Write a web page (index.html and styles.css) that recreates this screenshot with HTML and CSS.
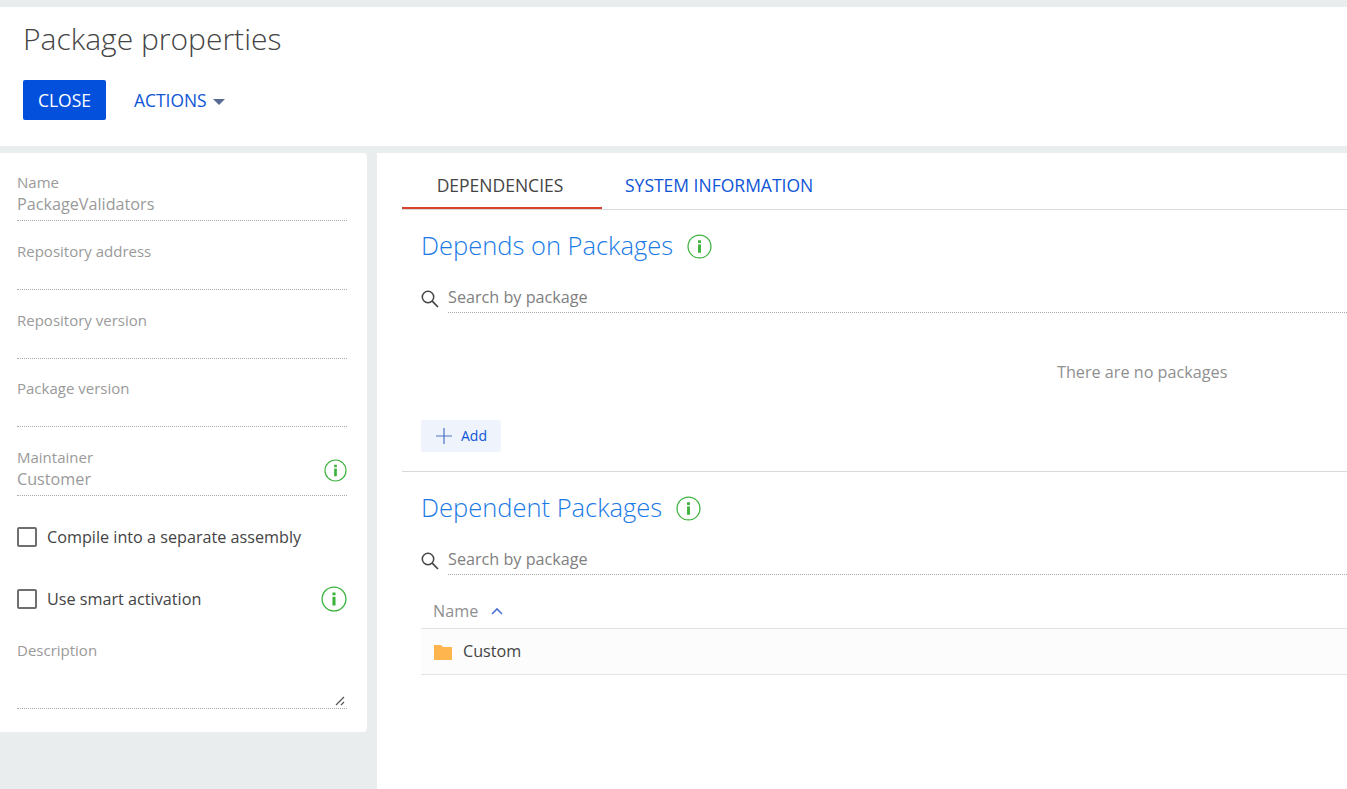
FILE: index.html
```html
<!doctype html>
<html>
  <head>
    <title>Package properties</title>
    <link rel="stylesheet" href="styles.css">
  </head>
  <body>
    <svg class="defs" width="0" height="0">
      <symbol id="info" viewBox="0 0 24 24">
        <circle cx="12" cy="12" r="11" fill="none" stroke="#3cb33c" stroke-width="1.2"/>
        <rect x="10.6" y="10" width="2.8" height="8" fill="#3cb33c"/>
        <rect x="10.6" y="6" width="2.8" height="2.6" fill="#3cb33c"/>
      </symbol>
      <symbol id="search" viewBox="0 0 18 18">
        <circle cx="7" cy="7" r="5.7" fill="none" stroke="#444" stroke-width="1.5"/>
        <path d="M11.2 11.2 L17 17" stroke="#444" stroke-width="1.7" fill="none"/>
      </symbol>
    </svg>
    <header class="page-head">
      <h1 class="page-title">Package properties</h1>
      <div class="actions">
        <button class="btn-close">CLOSE</button>
        <span class="btn-actions">ACTIONS<i class="caret"></i></span>
      </div>
    </header>
    <div class="content">
      <aside class="side">
        <div class="card">
          <div class="field field-name">
            <label>Name</label>
            <div class="value">PackageValidators</div>
          </div>
          <div class="field field-repo">
            <label>Repository address</label>
            <div class="value"></div>
          </div>
          <div class="field field-repo">
            <label>Repository version</label>
            <div class="value"></div>
          </div>
          <div class="field field-version">
            <label>Package version</label>
            <div class="value"></div>
          </div>
          <div class="field field-maintainer">
            <label>Maintainer</label>
            <div class="value">Customer</div>
            <svg class="info-field"><use href="#info"/></svg>
          </div>
          <div class="check check-compile"><i class="box"></i><span>Compile into a separate assembly</span></div>
          <div class="check check-smart">
            <i class="box"></i><span>Use smart activation</span>
            <svg class="info-big"><use href="#info"/></svg>
          </div>
          <div class="field field-desc">
            <label>Description</label>
            <div class="value textarea">
              <svg class="grip" width="10" height="10" viewBox="0 0 10 10">
                <path d="M1 9 L9 1 M6 9 L9 6" stroke="#555" stroke-width="1.2" fill="none"/>
              </svg>
            </div>
          </div>
        </div>
      </aside>
      <main class="main">
        <nav class="tabs">
          <span class="tab active">DEPENDENCIES</span>
          <span class="tab">SYSTEM INFORMATION</span>
        </nav>
        <section class="block block-first">
          <h2 class="block-title">Depends on Packages<svg class="info-title"><use href="#info"/></svg></h2>
          <div class="search">
            <svg class="search-icon"><use href="#search"/></svg>
            <span class="search-text">Search by package</span>
          </div>
          <div class="empty">There are no packages</div>
          <button class="btn-add">
            <svg width="18" height="18" viewBox="0 0 18 18"><path d="M9 1 V17 M1 9 H17" stroke="#4a72c4" stroke-width="1.2" fill="none"/></svg>
            <span class="add-text">Add</span>
          </button>
        </section>
        <section class="block block-second">
          <h2 class="block-title">Dependent Packages<svg class="info-title"><use href="#info"/></svg></h2>
          <div class="search">
            <svg class="search-icon"><use href="#search"/></svg>
            <span class="search-text">Search by package</span>
          </div>
          <div class="grid-head">
            Name
            <svg width="12" height="8" viewBox="0 0 12 8"><path d="M1 7 L6 2 L11 7" stroke="#4a72d4" stroke-width="1.6" fill="none"/></svg>
          </div>
          <div class="grid-row">
            <svg width="18" height="16" viewBox="0 0 18 16"><path d="M0 1 H7 L9 3 H18 V16 H0 Z" fill="#ffb54d"/></svg>
            Custom
          </div>
        </section>
      </main>
    </div>
  </body>
</html>
```

FILE: styles.css
```css
html, body {
  height: 100%;
}
body {
  margin: 0;
  height: 789px;
  overflow: hidden;
  background: #e9eded;
  font-family: "Open Sans", sans-serif;
  font-size: 16.2px;
  display: flex;
  flex-direction: column;
}
.defs {
  position: absolute;
}
.page-head {
  margin-top: 7px;
  height: 139px;
  background: #fff;
  padding-left: 23px;
  box-sizing: border-box;
}
.page-title {
  margin: 0;
  padding-top: 11px;
  font-size: 30px;
  line-height: 41px;
  font-weight: 300;
  color: #444;
}
.actions {
  display: flex;
  align-items: center;
  margin-top: 21px;
}
.btn-close {
  width: 83px;
  height: 40px;
  padding: 0;
  border: 0;
  border-radius: 2px;
  background: #0250dc;
  color: #fff;
  font: 17.5px "Open Sans", sans-serif;
}
.btn-actions {
  margin-left: 28px;
  color: #0e55d6;
  font-size: 17.4px;
}
.caret {
  display: inline-block;
  margin-left: 6px;
  vertical-align: middle;
  border-left: 6px solid transparent;
  border-right: 6px solid transparent;
  border-top: 6px solid #566a94;
}
.content {
  flex: 1;
  display: flex;
  margin-top: 7px;
  min-height: 0;
}
.side {
  width: 367px;
  margin-right: 10px;
  flex: none;
}
.card {
  height: 579px;
  box-sizing: border-box;
  background: #fff;
  border-radius: 0 4px 4px 0;
  padding: 0 20px 0 17px;
}
.field {
  position: relative;
  border-bottom: 1px dotted #aaa;
  height: 44px;
}
.field label {
  display: block;
  color: #9a9a9a;
  font-size: 15px;
  line-height: 19px;
  margin-bottom: 1px;
}
.field .value {
  color: #9a9a9a;
  line-height: 22px;
  height: 22px;
}
.field-name {
  padding-top: 20px;
  height: 47px;
}
.field-repo {
  padding-top: 21px;
  height: 47px;
}
.field-version {
  padding-top: 20px;
  height: 47px;
}
.field-maintainer {
  padding-top: 21px;
  height: 47px;
}
.info-field {
  position: absolute;
  right: 0;
  top: 32px;
  width: 23px;
  height: 23px;
}
.check {
  position: relative;
  display: flex;
  align-items: center;
  color: #444;
  line-height: 22px;
}
.check-compile {
  margin-top: 30px;
}
.check-smart {
  margin-top: 40px;
}
.box {
  width: 16px;
  height: 16px;
  border: 2px solid #6e6e6e;
  border-radius: 2px;
  margin-right: 10px;
}
.info-big {
  position: absolute;
  right: 0;
  top: -2px;
  width: 26px;
  height: 26px;
}
.field-desc {
  margin-top: 31px;
  height: 67px;
}
.field-desc .value {
  position: relative;
  height: 48px;
}
.grip {
  position: absolute;
  right: 2px;
  bottom: 3px;
}
.main {
  flex: 1;
  background: #fff;
  min-width: 0;
  padding-left: 25px;
}
.tabs {
  display: flex;
  height: 57px;
  box-sizing: border-box;
  margin-left: 0;
  border-bottom: 1px solid #d9d9d9;
  font-size: 17.5px;
}
.tab {
  padding: 21px 0 0 0;
  margin-left: 23px;
  color: #0e55d6;
  line-height: 22px;
}
.tab.active {
  width: 200px;
  height: 56px;
  box-sizing: border-box;
  margin-left: 0;
  padding-right: 4px;
  text-align: center;
  color: #444;
  border-bottom: 2px solid #d9412c;
}
.block {
  padding-left: 19px;
}
.block-first {
  height: 262px;
  box-sizing: border-box;
  border-bottom: 1px solid #d9d9d9;
}
.block-title {
  display: flex;
  align-items: center;
  margin: 0;
  height: 38px;
  padding-top: 16px;
  font-size: 25.5px;
  line-height: 38px;
  font-weight: 300;
  color: #1a7ae6;
}
.info-title {
  margin-left: 14px;
  margin-top: 2px;
  width: 25px;
  height: 25px;
}
.search {
  display: flex;
  align-items: flex-end;
  margin-top: 20px;
}
.search-icon {
  width: 18px;
  height: 18px;
  margin-right: 9px;
  margin-bottom: 5px;
  flex: none;
}
.search-text {
  flex: 1;
  height: 28px;
  line-height: 26px;
  color: #808080;
  border-bottom: 1px dotted #aaa;
}
.empty {
  margin-top: 47px;
  margin-left: 636px;
  width: 200px;
  line-height: 24px;
  color: #8f8f8f;
}
.btn-add {
  display: flex;
  align-items: center;
  margin-top: 36px;
  width: 80px;
  height: 32px;
  border: 0;
  border-radius: 3px;
  padding: 0 0 0 14px;
  background: #eff3fc;
  color: #0e55d6;
  font: 14px "Open Sans", sans-serif;
}
.btn-add svg {
  margin-right: 8px;
}
.add-text {
  padding-bottom: 2px;
}
.grid-head {
  display: flex;
  align-items: center;
  height: 54px;
  box-sizing: border-box;
  padding: 19px 0 0 12px;
  color: #8f8f8f;
  border-bottom: 1px solid #e3e3e3;
}
.grid-head svg {
  margin-left: 13px;
}
.grid-row {
  display: flex;
  align-items: center;
  height: 46px;
  box-sizing: border-box;
  padding: 0 0 2px 13px;
  background: #fcfcfc;
  color: #444;
  border-bottom: 1px solid #e3e3e3;
}
.grid-row svg {
  margin-right: 11px;
  margin-top: 2px;
}
```
